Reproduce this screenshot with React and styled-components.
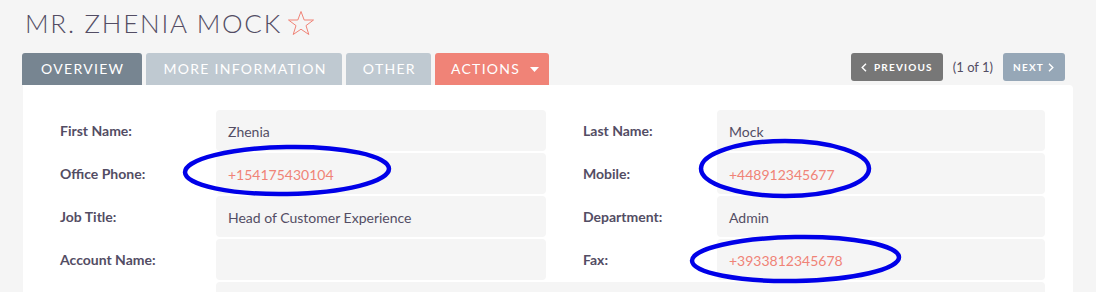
import styled, { createGlobalStyle } from "styled-components"

const GlobalStyle = createGlobalStyle`
body{
    margin:0;
    background:#f5f5f5;
    font-family:Lato, "Open Sans", sans-serif;
    color:#534d64;
}
`

const Page = styled.div`
position:relative;
width:1096px;
height:292px;
overflow:hidden;
padding:7px 23px 0 22px;
box-sizing:border-box;
`

const TitleRow = styled.h2`
margin:0 0 14px 3px;
display:flex;
align-items:center;
gap:5px;
height:32px;
font-size:26px;
line-height:32px;
font-weight:300;
letter-spacing:1.75px;
color:#534d64;
text-transform:uppercase;
`

const TabBar = styled.div`
display:flex;
justify-content:space-between;
align-items:flex-start;
`

const Tabs = styled.div`
display:flex;
gap:4px;
`

const Tab = styled.div`
height:32px;
line-height:32px;
padding:${p => p.$pad || "0 15px 0 17px"};
border-radius:3px 3px 0 0;
font-size:14px;
letter-spacing:1.3px;
color:#fff;
text-transform:uppercase;
background:${p => p.$bg};
display:flex;
align-items:center;
gap:10px;
`

const Pager = styled.div`
display:flex;
align-items:center;
gap:10px;
margin-right:8px;
`

const PagerButton = styled.div`
height:28px;
display:flex;
align-items:center;
gap:${p => p.$gap};
padding:${p => p.$pad};
border-radius:3px;
background:${p => p.$bg};
color:#fff;
font-size:10px;
font-weight:700;
letter-spacing:1.2px;
text-transform:uppercase;
`

const Count = styled.span`
font-size:13px;
color:#534d64;
`

const Panel = styled.div`
margin-left:1px;
background:#fff;
border-radius:0 4px 0 0;
padding:25px 28px 0 37px;
height:220px;
`

const Grid = styled.div`
display:grid;
grid-template-columns:156px 330px 171px 328px;
grid-auto-rows:41px;
row-gap:2px;
`

const Label = styled.div`
padding-top:11px;
padding-left:${p => (p.$right ? "37px" : "0")};
font-size:14px;
line-height:20px;
font-weight:700;
color:#534d64;
`

const Value = styled.div`
background:#f5f5f5;
border-radius:4px;
padding:12px 12px 0;
font-size:14px;
line-height:20px;
color:${p => (p.$phone ? "#f08377" : "#534d64")};
grid-column:${p => (p.$wide ? "2 / 5" : "auto")};
`

const Marks = styled.svg`
position:absolute;
left:0;
top:0;
pointer-events:none;
`

const Star = () => (
    <svg width="28" height="26" viewBox="0 0 28 26">
        <polygon
            points="14,1.5 17.2,10 26.5,10 19,15.6 21.8,24.5 14,19.2 6.2,24.5 9,15.6 1.5,10 10.8,10"
            fill="none"
            stroke="#f08377"
            strokeWidth="1"
        />
    </svg>
)

const Caret = () => (
    <svg width="9" height="5" viewBox="0 0 9 5">
        <polygon points="0,0 9,0 4.5,5" fill="#fff" />
    </svg>
)

const Chevron = ({ dir }) => (
    <svg width="6" height="9" viewBox="0 0 6 9">
        <polyline
            points={dir === "left" ? "5,0.8 1.2,4.5 5,8.2" : "1,0.8 4.8,4.5 1,8.2"}
            fill="none"
            stroke="#fff"
            strokeWidth="1.4"
        />
    </svg>
)

const rows = [
    ["First Name:", "Zhenia", false, "Last Name:", "Mock", false],
    ["Office Phone:", "+154175430104", true, "Mobile:", "+448912345677", true],
    ["Job Title:", "Head of Customer Experience", false, "Department:", "Admin", false],
    ["Account Name:", "", false, "Fax:", "+3933812345678", true],
]

const App = () => {
    return (
        <Page>
            <GlobalStyle />
            <TitleRow>
                Mr. Zhenia Mock
                <Star />
            </TitleRow>
            <TabBar>
                <Tabs>
                    <Tab $bg="#778591" $pad="0 18px 0 19px">Overview</Tab>
                    <Tab $bg="#bfc9d1">More Information</Tab>
                    <Tab $bg="#bfc9d1">Other</Tab>
                    <Tab $bg="#f08377" $pad="0 10px 0 16px">Actions <Caret /></Tab>
                </Tabs>
                <Pager>
                    <PagerButton $bg="#777777" $pad="0 10px 0 10px" $gap="7px">
                        <Chevron dir="left" />
                        Previous
                    </PagerButton>
                    <Count>(1 of 1)</Count>
                    <PagerButton $bg="#96a7b7" $pad="0 11px 0 10px" $gap="4px">
                        Next
                        <Chevron dir="right" />
                    </PagerButton>
                </Pager>
            </TabBar>
            <Panel>
                <Grid>
                    {rows.map(r => [
                        <Label key={r[0]}>{r[0]}</Label>,
                        <Value key={r[0] + "v"} $phone={r[2]}>{r[1]}</Value>,
                        <Label key={r[3]} $right>{r[3]}</Label>,
                        <Value key={r[3] + "v"} $phone={r[5]}>{r[4]}</Value>,
                    ])}
                    <Label />
                    <Value $wide />
                </Grid>
            </Panel>
            <Marks width="1096" height="292" viewBox="0 0 1096 292">
                <ellipse cx="287" cy="170.5" rx="102" ry="23.5" fill="none" stroke="#0000e8" strokeWidth="4.5" transform="rotate(-1 287 170.5)" />
                <ellipse cx="785" cy="168.5" rx="84" ry="27.5" fill="none" stroke="#0000e8" strokeWidth="4.5" />
                <ellipse cx="795.5" cy="259" rx="103.5" ry="22" fill="none" stroke="#0000e8" strokeWidth="4.5" transform="rotate(-1 795.5 259)" />
            </Marks>
        </Page>
    )
}

export default App
